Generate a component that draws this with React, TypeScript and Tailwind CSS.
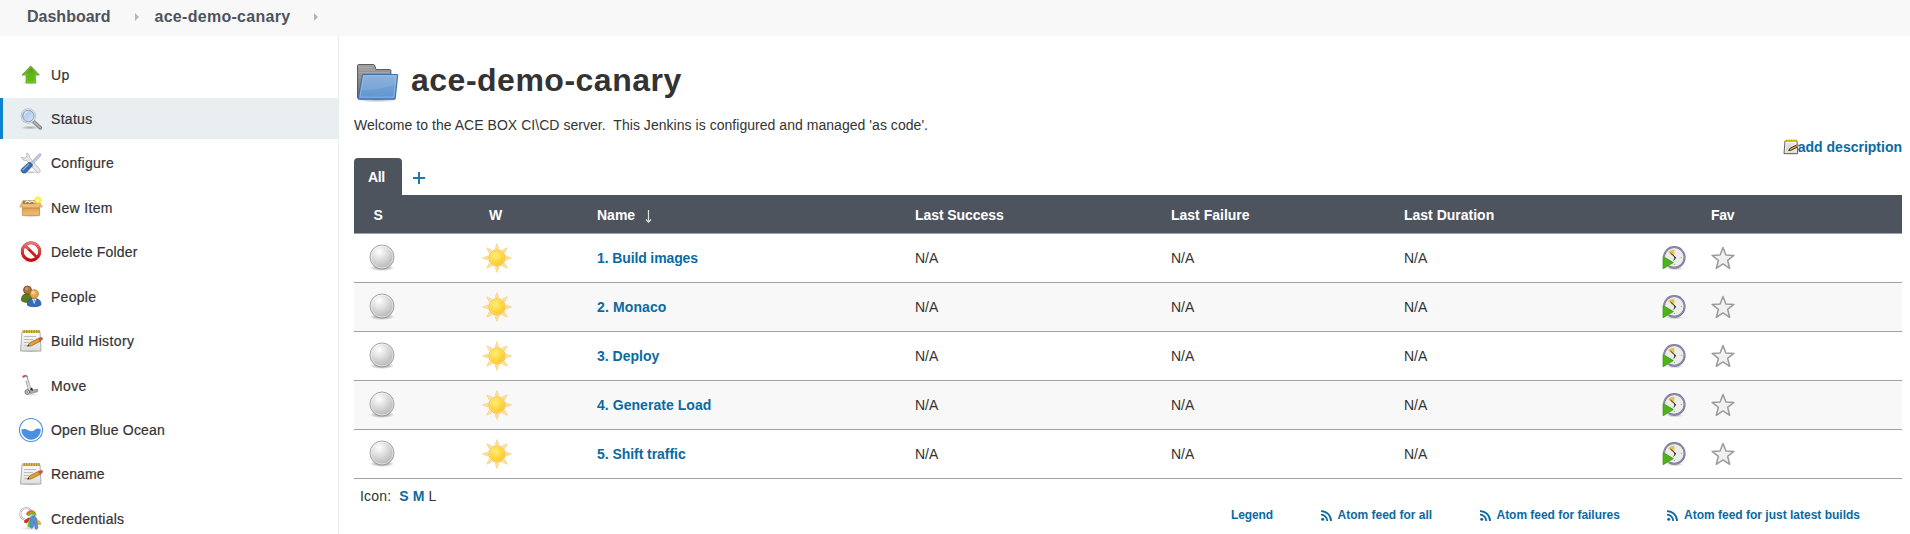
import type { ReactNode } from 'react';

function Gradients() {
  return (
    <svg className="absolute h-0 w-0" aria-hidden="true">
      <defs>
        <linearGradient id="green" x1="0" y1="0" x2="0" y2="1"><stop offset="0" stopColor="#4e9a06" /><stop offset="0.45" stopColor="#62b01c" /><stop offset="1" stopColor="#55c800" /></linearGradient>
        <radialGradient id="ball" cx="0.38" cy="0.28" r="0.75"><stop offset="0" stopColor="#ffffff" /><stop offset="0.45" stopColor="#dedede" /><stop offset="1" stopColor="#b4b4b4" /></radialGradient>
        <radialGradient id="shadow"><stop offset="0" stopColor="#000" stopOpacity="0.5" /><stop offset="1" stopColor="#000" stopOpacity="0" /></radialGradient>
        <radialGradient id="sun" cx="0.4" cy="0.35" r="0.7"><stop offset="0" stopColor="#ffee76" /><stop offset="0.6" stopColor="#fdd53c" /><stop offset="1" stopColor="#f8bc2c" /></radialGradient>
        <linearGradient id="folderBack" x1="0" y1="0" x2="0" y2="1"><stop offset="0" stopColor="#a0a0a0" /><stop offset="1" stopColor="#686868" /></linearGradient>
        <linearGradient id="folderFront" x1="0" y1="0" x2="0" y2="1"><stop offset="0" stopColor="#82abd9" /><stop offset="1" stopColor="#5f94d0" /></linearGradient>
        <linearGradient id="red" x1="0" y1="0" x2="0" y2="1"><stop offset="0" stopColor="#e87a7a" /><stop offset="1" stopColor="#cc0000" /></linearGradient>
        <linearGradient id="box" x1="0" y1="0" x2="0" y2="1"><stop offset="0" stopColor="#d79a4c" /><stop offset="1" stopColor="#f0bc78" /></linearGradient>
        <radialGradient id="glow"><stop offset="0" stopColor="#fffcb0" /><stop offset="0.4" stopColor="#fcee3e" /><stop offset="1" stopColor="#fce94f" stopOpacity="0" /></radialGradient>
        <linearGradient id="star" x1="0" y1="0" x2="0" y2="1"><stop offset="0" stopColor="#f4f4f4" /><stop offset="1" stopColor="#eeeeee" /></linearGradient>
        <linearGradient id="lens" x1="0" y1="0" x2="1" y2="1"><stop offset="0" stopColor="#a3c0e6" /><stop offset="1" stopColor="#d9e6f6" /></linearGradient>
        <linearGradient id="paper" x1="0" y1="0" x2="0" y2="1"><stop offset="0" stopColor="#fbfbfb" /><stop offset="1" stopColor="#dededc" /></linearGradient>
      </defs>
    </svg>
  );
}

function Svg({ children }: { children: ReactNode }) {
  return <svg viewBox="0 0 24 24" className="h-6 w-6 shrink-0 overflow-visible">{children}</svg>;
}

const UpIcon = () => (
  <Svg>
    <ellipse cx="11.500" cy="20" rx="9" ry="1.800" fill="url(#shadow)" opacity="0.5" />
    <path d="M11.700 3 20.400 12H16.600V19.800H7V12H3Z" fill="url(#green)" stroke="#4a9210" strokeWidth="0.700" />
    <path d="M11.700 4.300 18.600 11.300H15.800V19H7.800V11.300H5.200Z" fill="none" stroke="#a3dc66" strokeWidth="0.600" opacity="0.7" />
  </Svg>
);
const SearchIcon = () => (
  <Svg>
    <ellipse cx="11" cy="20.600" rx="9.500" ry="2" fill="url(#shadow)" opacity="0.6" />
    <path d="M14.800 14.800 21.400 20.800" stroke="#7f7f7f" strokeWidth="3.600" strokeLinecap="round" />
    <path d="M15 15 21.200 20.600" stroke="#b5b5b0" strokeWidth="1.900" strokeLinecap="round" />
    <circle cx="9.300" cy="9" r="7.600" fill="#9b9d9a" />
    <circle cx="9.300" cy="9" r="7.100" fill="#eeefed" />
    <circle cx="9.300" cy="9" r="5.700" fill="url(#lens)" stroke="#6e93c4" strokeWidth="0.900" />
    <path d="M5.500 8.500a4 4 0 0 1 4-3.800" fill="none" stroke="#dce9fa" strokeWidth="1.200" />
  </Svg>
);
const ToolsIcon = () => (
  <Svg>
    <ellipse cx="12" cy="21.300" rx="10" ry="1.600" fill="url(#shadow)" opacity="0.5" />
    <path d="M7.600 2.200c2 .5 3 1.900 2.800 4.200l10 11.500c1.100 1.400 1 2.800.2 3.500-1 .8-2.200.5-3.300-.7L7.600 9.500C5 10 3 8.600 2.500 6l2.700 1.100 2.200-.8.500-1.900Z" fill="#e6e7e5" stroke="#b0b2af" strokeWidth="0.800" />
    <path d="m11.500 12 6.800-7.200 2.800-2.300 1.100 1-2 3.100-7 6.900Z" fill="#c3ccda" stroke="#93a2bb" strokeWidth="0.700" />
    <path d="M9.700 11.600c1.600-.6 4.200 1.700 3.600 3.400L7.400 21.200c-1.300 1.100-3.100 1.100-4.300.2-1.400-1.200-1.300-2.800-.1-3.900Z" fill="#3a6bb0" stroke="#274f8c" strokeWidth="0.700" />
    <path d="m9.900 13-6.300 6.400" stroke="#8fb3e2" strokeWidth="1.200" />
  </Svg>
);
const BoxIcon = () => (
  <Svg>
    <ellipse cx="12" cy="20" rx="10" ry="1.600" fill="url(#shadow)" opacity="0.4" />
    <path d="M4 8V4.800L18.500 4.400 20.200 8Z" fill="#9a8462" stroke="#b98339" strokeWidth="0.700" />
    <path d="M6 6.500 8.500 5l2 1.200L13 5l3 1.600" fill="none" stroke="#ece8df" strokeWidth="1.300" />
    <path d="M3.400 9h17.200v10.400H3.400Z" fill="url(#box)" stroke="#bd7f2f" strokeWidth="0.700" />
    <path d="M3.400 8.200 4.200 4.800 1.200 9.800.9 11h2.900Zm17.200 0-1-3.400 3.200 5 .3 1.200h-2.900Z" fill="#f0c582" stroke="#c48a3e" strokeWidth="0.600" />
    <path d="M3.400 8h17.200v3.500H3.400Z" fill="#edbd78" />
    <path d="M3.800 12.200h16.400" stroke="#c98d40" strokeWidth="1" />
    <circle cx="18.900" cy="4.200" r="5" fill="url(#glow)" />
    <circle cx="18.900" cy="4.200" r="2.800" fill="#fbec2c" />
    <circle cx="18.900" cy="4.200" r="1.500" fill="#fffac0" />
  </Svg>
);
const DeleteIcon = () => (
  <Svg>
    <ellipse cx="12" cy="21" rx="10" ry="1.900" fill="url(#shadow)" opacity="0.55" />
    <circle cx="12" cy="11.500" r="8.300" fill="#fff" fillOpacity="0.8" />
    <path d="m6.200 5.800 11.600 11.400" stroke="#d21b1b" strokeWidth="2.800" />
    <circle cx="12" cy="11.500" r="8.700" fill="none" stroke="#b83030" strokeWidth="3" />
    <circle cx="12" cy="11.500" r="8.700" fill="none" stroke="url(#red)" strokeWidth="2.400" />
    <path d="m6.700 6.300 3 3" stroke="#e26464" strokeWidth="1.900" />
  </Svg>
);
const PeopleIcon = () => (
  <Svg>
    <path d="M2.500 15.800c-.2-4.700 1.300-7 6-7s6.500 3 5.500 7c-2.500 2-8.500 2.300-11.500 0Z" fill="#5a7a20" stroke="#41590f" strokeWidth="0.700" />
    <circle cx="8.500" cy="5" r="4" fill="#a9743a" stroke="#74491b" strokeWidth="0.800" />
    <circle cx="7.700" cy="3.800" r="1.700" fill="#c99a62" />
    <path d="M8.500 20.200c-.3-4.300 1.500-6.800 6.500-6.800s7.400 2.700 6.900 6.500c-2.700 2.200-10.400 2.400-13.400.3Z" fill="#356db5" stroke="#204a87" strokeWidth="0.700" />
    <path d="m13 13.500 2.200 5.700 2.200-5.700Z" fill="#f4f6f9" /><path d="m14.600 14-.2 2 .8 2.200.8-2.200-.2-2Z" fill="#8fb0da" />
    <circle cx="15.200" cy="9" r="4.200" fill="#eba94e" stroke="#bf7520" strokeWidth="0.800" />
    <circle cx="14.300" cy="7.500" r="1.900" fill="#f8cf8d" />
  </Svg>
);
const NotepadIcon = ({ small }: { small?: boolean }) => (
  <svg viewBox="0 0 24 24" className={small ? 'h-4 w-4 shrink-0 overflow-visible' : 'h-6 w-6 shrink-0 overflow-visible'}>
    <ellipse cx="12" cy="22.300" rx="10" ry="1.300" fill="url(#shadow)" opacity="0.5" />
    <path d="M3 2.800h18l1 19.200H1.500Z" fill="url(#paper)" stroke={small ? '#5f615d' : '#9a9c98'} strokeWidth={small ? 1.5 : 0.8} />
    <path d="M3.500 1.200h17v2.800h-17Z" fill={small ? '#edd400' : '#d6bf3c'} />
    <path d="M5.200 1v3M7.700 1v3M10.200 1v3M12.700 1v3M15.200 1v3M17.700 1v3M20 1v3" stroke="#8f7a1f" strokeWidth="0.800" />
    <path d="M5 7.500h12M5 10.500h9M5 13.500h5M5 16.500h3" stroke="#bdbebb" strokeWidth="1" />
    <path d="m8.400 17.300 2.300-3.500 9.300-4.600 1.800 2.800-9.300 4.700Z" fill="#e2a136" stroke={small ? '#4d3812' : '#8a5a12'} strokeWidth={small ? 1.5 : 0.7} />
    <path d="m8.400 17.300 1.100-1.700.9 1.300Z" fill="#2e3436" />
    <path d="m19.300 9.400 2.400-1c1.800-.3 2.500 1.400 1.400 2.400l-2 1.400Z" fill={small ? '#b98a63' : '#dd4e40'} stroke="#9f5c50" strokeWidth="0.500" />
  </svg>
);
const MoveIcon = () => (
  <Svg>
    <ellipse cx="12" cy="20.500" rx="8" ry="1.400" fill="url(#shadow)" opacity="0.35" />
    <path d="m5.500 3 2.500-.8 4 14.800M7 6.500 10 18" fill="none" stroke="#a3a5a2" strokeWidth="1.100" />
    <path d="m7.600 8.500 2.400-.5 2 7.500-2.500.6Z" fill="#e3e4e1" stroke="#a9aaa7" strokeWidth="0.600" />
    <path d="M3.300 3.300c0-1.300 1-2.200 2.500-2.300l.6 1.200-1.800 1.600Z" fill="#cc3a3a" /><path d="M6 1.200c1.600 0 2.200.7 2.200 2" stroke="#6b6d6a" fill="none" />
    <path d="m11 16.700 7.500-1.700.3 2.700-7.600 1.900Z" fill="#a9aba7" stroke="#7b7d79" strokeWidth="0.600" />
    <path d="m11 15.200 1.300-1.700 1.500 1.200v2Z" fill="#252525" />
    <circle cx="8.300" cy="18" r="2.300" fill="#e5e5e3" stroke="#555753" strokeWidth="0.900" /><circle cx="8.300" cy="18" r="0.700" fill="#444" />
  </Svg>
);
const OceanIcon = () => (
  <Svg>
    <circle cx="12" cy="12" r="11.500" fill="#fff" stroke="#4a90e2" strokeWidth="1.100" />
    <path d="M2.300 11.500c3-1.100 5-.4 7.400.9 3 1.500 4.500.6 6.500-.9 1.800-1.300 3.800-1.200 5.500-.4A9.800 9.800 0 0 1 12 21.700 9.900 9.900 0 0 1 2.300 11.500Z" fill="#4a90e2" />
  </Svg>
);
const KeysIcon = () => (
  <Svg>
    <ellipse cx="10" cy="21.500" rx="9.500" ry="1.700" fill="url(#shadow)" opacity="0.3" />
    <circle cx="7.200" cy="7" r="5.900" fill="none" stroke="#8c8e8b" strokeWidth="1.800" /><circle cx="7.200" cy="7" r="5.900" fill="none" stroke="#f6f6f4" strokeWidth="1" />
    <path d="m15 9 6.700 6.700-.3 2-2-.2-6.900-6.500Z" fill="#e9b72f" stroke="#b98b12" strokeWidth="0.500" />
    <path d="m9.800 10.500-4.700 3 .2 2.300 2.500.5 4.500-4Z" fill="#d62e2e" />
    <path d="m10.200 12-2 7.200 1.700 1.600 1.900-1 1.500-8Z" fill="#68cf35" />
    <path d="M7.700 7.600c2.500-4.500 7.300-4.300 8.700.2" fill="none" stroke="#e46434" strokeWidth="2.300" />
    <path d="M9.500 9c.8-3.200 5.500-3.600 7-.2" fill="none" stroke="#73bd30" strokeWidth="2.400" />
    <path d="M11.600 10.500 11 20l2 1.500 1.400-1.500.3-5.500 1.600 7.500 1.700.2 1-1.700-2-10a3 3 0 0 0-5.400 0Z" fill="#5a90cf" stroke="#3d70b0" strokeWidth="0.600" />
  </Svg>
);

const Ball = () => (
  <svg viewBox="0 0 26 28" className="h-7 w-[26px] overflow-visible">
    <ellipse cx="13" cy="23.800" rx="12.500" ry="3.200" fill="url(#shadow)" />
    <circle cx="13" cy="13" r="12" fill="url(#ball)" stroke="#999" strokeWidth="0.900" />
    <circle cx="13" cy="13" r="11" fill="none" stroke="#fff" strokeWidth="0.800" opacity="0.6" />
  </svg>
);
const rays = [0, 45, 90, 135, 180, 225, 270, 315];
const Sun = () => (
  <svg viewBox="-15 -15 30 30" className="h-[30px] w-[30px]">
    {rays.map((a) => (
      <path key={a} d="M-1.900-9.300 0-14.500 1.900-9.300Z" transform={`rotate(${a})`} fill="#fde494" stroke="#f5cd7c" strokeWidth="0.600" />
    ))}
    <circle r="8.300" fill="url(#sun)" stroke="#f6b545" strokeWidth="0.800" />
    <circle r="7.300" fill="none" stroke="#ffe680" strokeWidth="0.800" opacity="0.7" />
  </svg>
);
const Schedule = () => (
  <svg viewBox="0 0 24 24" className="h-6 w-6 overflow-visible">
    <ellipse cx="13" cy="22.500" rx="9" ry="1.700" fill="url(#shadow)" opacity="0.6" />
    <circle cx="12.300" cy="11.400" r="10.300" fill="#ecece9" stroke="#77749b" strokeWidth="2" />
    <circle cx="12.300" cy="11.400" r="10.300" fill="none" stroke="#a09dbd" strokeWidth="0.600" />
    <path d="M12.300 11.400 6.300 6.200c1.500-1.700 3.400-2.500 6-2.500Z" fill="#e8c14e" />
    <path d="m8.500 7 5 4.500-1.800 3" fill="none" stroke="#2e3436" strokeWidth="1" />
    <circle cx="13" cy="11.700" r="0.900" fill="#2e3436" />
    <path d="M18.800 11.500h1M12.300 18v1" stroke="#999" strokeWidth="1" />
    <path d="M1 10.300v12.800l10.500-6.400Z" fill="#45ad12" stroke="#e0efd8" strokeWidth="1" />
    <path d="M1.100 10.400v12.300l10.200-6.100Z" fill="#4db51a" stroke="#3b8e0c" strokeWidth="0.700" />
  </svg>
);
const Star = () => (
  <svg viewBox="0 0 24 24" className="h-6 w-6">
    <path d="m12 1.500 2.900 7.600 8 .3-6.300 4.900 2.100 8L12 17.900 5.300 22.300l2.100-8-6.300-4.900 8-.3Z" fill="url(#star)" stroke="#9b9b9b" strokeWidth="1.500" strokeLinejoin="round" />
  </svg>
);
const Folder = () => (
  <svg viewBox="0 0 46 42" className="mt-[3px] h-[42px] w-[46px]">
    <ellipse cx="23" cy="37.500" rx="22" ry="3" fill="url(#shadow)" opacity="0.7" />
    <path d="M3.500 36V3.800c0-1 .5-1.300 1.300-1.300h14.400c.9 0 1.400.4 1.700 1.300l1.100 3.700h13.700c.8 0 1.200.4 1.200 1.200V30L33 36Z" fill="url(#folderBack)" stroke="#5d5d5d" />
    <path d="M5 5.500h14M5 8h16M5 10.500h30M5 13h3M5 15.500h3M5 18h3M5 20.500h3M5 23h2M5 25.500h2M5 28h2M5 30.500h2" stroke="#fff" strokeOpacity="0.18" />
    <path d="M9.300 12.500h33.400c.7 0 1 .4.900 1l-2.400 22.400c-.1.800-.6 1.300-1.500 1.300H5.300c-.7 0-1-.5-.9-1.200L8.300 13.500c.1-.7.400-1 1-1Z" fill="url(#folderFront)" stroke="#3f70ad" strokeWidth="1.200" />
    <path d="M9.700 14h32.200l-1 9.500c-7.400-.5-12 5-33.300 4.500Z" fill="#fff" opacity="0.09" />
    <path d="M9.700 13.700h32.500l-2.300 21.500H5.900Z" fill="none" stroke="#b8d2ee" strokeWidth="0.900" opacity="0.5" />
  </svg>
);
const Rss = () => (
  <svg viewBox="0 0 11 11" className="h-[11px] w-[11px]" fill="none" stroke="#0b6aa2" strokeWidth="1.800">
    <circle cx="1.700" cy="9.200" r="1.500" fill="#0b6aa2" stroke="none" />
    <path d="M0 4.700A6.200 6.200 0 0 1 6.300 11M0 1.100A9.900 9.900 0 0 1 10 11" />
  </svg>
);
const Caret = () => <svg viewBox="0 0 4 8" className="h-2 w-1"><path d="M0 0 4 4 0 8Z" fill="#b4b7ba" /></svg>;

const tasks = [
  { label: 'Up', icon: <UpIcon />, track: 'tracking-[0.3px]' },
  { label: 'Status', icon: <SearchIcon />, track: 'tracking-[0.3px]', active: true },
  { label: 'Configure', icon: <ToolsIcon />, track: 'tracking-[0.25px]' },
  { label: 'New Item', icon: <BoxIcon />, track: 'tracking-[0.33px]' },
  { label: 'Delete Folder', icon: <DeleteIcon />, track: 'tracking-[0.2px]' },
  { label: 'People', icon: <PeopleIcon />, track: 'tracking-[0.28px]' },
  { label: 'Build History', icon: <NotepadIcon />, track: 'tracking-[0.36px]' },
  { label: 'Move', icon: <MoveIcon />, track: 'tracking-[0.35px]' },
  { label: 'Open Blue Ocean', icon: <OceanIcon />, track: 'tracking-[0.18px]' },
  { label: 'Rename', icon: <NotepadIcon />, track: 'tracking-[0.12px]' },
  { label: 'Credentials', icon: <KeysIcon />, track: 'tracking-[0.22px]' },
];

const jobs = [
  { name: '1. Build images', track: 'tracking-[-0.12px]' },
  { name: '2. Monaco', track: 'tracking-[0.12px]' },
  { name: '3. Deploy', track: 'tracking-[0px]' },
  { name: '4. Generate Load', track: 'tracking-[0.05px]' },
  { name: '5. Shift traffic', track: 'tracking-[-0.05px]' },
];

const columns = 'grid grid-cols-[128px_115px_318px_256px_233px_258px_49px_1fr] items-center';

export default function App() {
  return (
    <div className="flex h-[534px] w-full flex-col overflow-hidden bg-white font-['Liberation_Sans',Arial,sans-serif] text-sm text-[#333]">
      <Gradients />
      <nav className="flex h-9 shrink-0 items-center bg-[#f8f8f8] pb-[3px] pl-[27px] text-base font-bold text-[#4d545d]">
        <span className="w-[108px]">Dashboard</span>
        <Caret />
        <span className="ml-[15.500px] w-[159.500px] tracking-[0.28px]">ace-demo-canary</span>
        <Caret />
      </nav>
      <div className="flex min-h-0 flex-1">
        <aside className="w-[339px] shrink-0 border-r border-[#e6eef0] pt-[18px]">
          {tasks.map((t) => (
            <a key={t.label} className={`mb-[3.450px] flex h-[41px] items-center gap-2 pl-[19px] [-webkit-text-stroke:0.2px_#333] ${t.active ? 'bg-[#e9eef1] shadow-[inset_3px_0_0_#0b83d0]' : ''} ${t.track}`}>
              {t.icon}
              <span>{t.label}</span>
            </a>
          ))}
        </aside>
        <main className="flex-1 pl-[15px] pr-2">
          <h1 className="mt-[22px] flex h-[46px] items-center text-[32px] font-bold leading-none tracking-[0.5px]">
            <Folder />
            <span className="ml-[11px] pb-[2px]">ace-demo-canary</span>
          </h1>
          <p className="mt-[11px] h-5 leading-5 tracking-[0.04px]">Welcome to the ACE BOX CI\CD server.&nbsp; This Jenkins is configured and managed 'as code'.</p>
          <div className="mt-px mb-px flex h-[21px] items-center justify-end font-bold text-[#0b6aa2]">
            <NotepadIcon small />
            <span className="-ml-px">add description</span>
          </div>
          <div className="flex h-[37px] items-center">
            <span className="flex h-full w-12 items-center rounded-t bg-[#4d545d] pl-[14px] font-bold tracking-[-0.4px] text-white">All</span>
            <svg viewBox="0 0 12 12" className="ml-[11px] mt-[3px] h-3 w-3"><path d="M6 0v12M0 6h12" stroke="#1f78b0" strokeWidth="2" /></svg>
          </div>
          <div className={`${columns} h-[39px] border-b border-[#98a4ad] bg-[#4d545d] pt-[2px] font-bold text-white`}>
            <span className="pl-[19.500px]">S</span>
            <span className="pl-[7px]">W</span>
            <span className="flex items-center">Name
              <svg viewBox="0 0 7 13" className="ml-[10px] mt-[3px] h-[13px] w-[7px]"><path d="M3.500 0v12M1 9.500l2.500 2.700L6 9.500" fill="none" stroke="#dcdee0" strokeWidth="1.200" /></svg>
            </span>
            <span className="tracking-[-0.07px]">Last Success</span>
            <span>Last Failure</span>
            <span>Last Duration</span>
            <span />
            <span className="tracking-[-0.3px]">Fav</span>
          </div>
          {jobs.map((j, i) => (
            <div key={j.name} className={`${columns} h-[49px] border-b border-[#98a4ad] ${i % 2 ? 'bg-[#f8f8f8]' : 'bg-white'}`}>
              <span className="pl-[15px]"><Ball /></span>
              <span><Sun /></span>
              <a className={`font-bold text-[#0b6aa2] ${j.track}`}>{j.name}</a>
              <span>N/A</span>
              <span>N/A</span>
              <span>N/A</span>
              <Schedule />
              <Star />
            </div>
          ))}
          <div className="flex h-[34px] items-center pl-[6px]">
            <span className="tracking-[0.2px]">Icon:</span>
            <b className="ml-[8px] text-[#0b6aa2]">S</b>
            <b className="ml-[4px] text-[#0b6aa2]">M</b>
            <span className="ml-[4px]">L</span>
          </div>
          <div className="flex h-1 items-center pl-[877px] text-xs font-bold text-[#0b6aa2]">
            <span className="w-[89.500px] tracking-[-0.1px]">Legend</span>
            <Rss /><span className="ml-1.5 w-[142px]">Atom feed for all</span>
            <Rss /><span className="ml-1.5 w-[170.500px] tracking-[-0.03px]">Atom feed for failures</span>
            <Rss /><span className="ml-1.5">Atom feed for just latest builds</span>
          </div>
        </main>
      </div>
    </div>
  );
}
